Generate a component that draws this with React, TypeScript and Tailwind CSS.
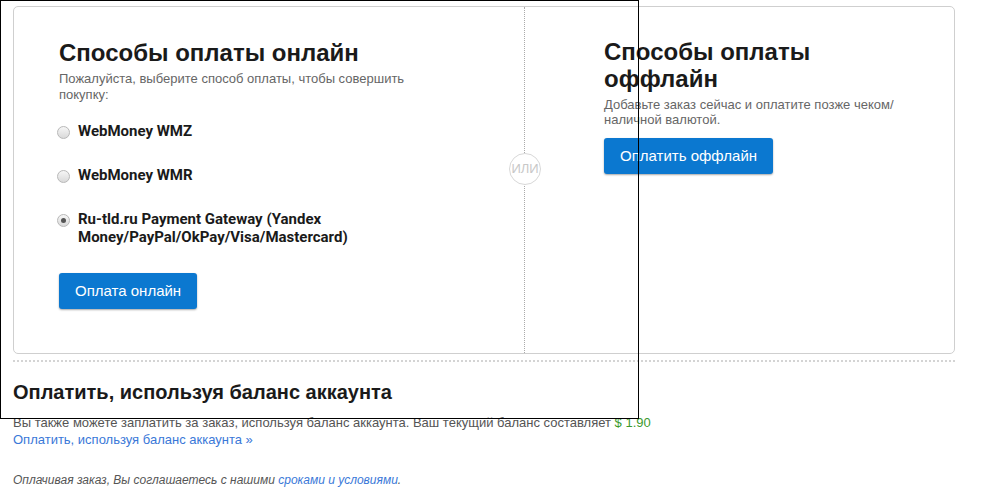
import { useState } from 'react';

const methods = [
  { id: 'wmz', label: 'WebMoney WMZ' },
  { id: 'wmr', label: 'WebMoney WMR' },
  { id: 'rutld', label: 'Ru-tld.ru Payment Gateway (Yandex Money/PayPal/OkPay/Visa/Mastercard)' },
];

const Radio = ({ checked }: { checked: boolean }) => (
  <span className="ml-[-2px] mt-[4px] flex h-[13px] w-[13px] shrink-0 items-center justify-center rounded-full border border-[#b8b8b8] bg-gradient-to-b from-[#f6f6f6] to-[#dadada]">
    {checked && <span className="h-[5px] w-[5px] rounded-full bg-[#555]" />}
  </span>
);

export default function App() {
  const [method, setMethod] = useState('rutld');

  return (
    <div className="relative min-h-[488px] w-[1002px] bg-white font-['Liberation_Sans',Arial,sans-serif] text-[#333]">
      <div className="w-[968px] px-[13px] pt-[6px]">
        {/* карточка с двумя колонками */}
        <div className="flex h-[348px] rounded-[5px] border border-[#cfcfcf]">
          <div className="relative w-[511px] border-r border-dotted border-[#aaa] pl-[45px] pt-[31px]">
            <h2 className="text-[24px] font-bold leading-[30px] text-[#1a1a1a]">Способы оплаты онлайн</h2>
            <p className="mt-[3px] w-[380px] text-[13px] leading-[16px] text-[#666]">
              Пожалуйста, выберите способ оплаты, чтобы совершить покупку:
            </p>

            <div className="mt-[19px] flex flex-col gap-[26px]">
              {methods.map((m) => (
                <label
                  key={m.id}
                  onClick={() => setMethod(m.id)}
                  className="flex cursor-pointer gap-[8px] font-['Roboto','Liberation_Sans',sans-serif] text-[15px] font-bold leading-[18px] text-[#1a1a1a]"
                >
                  <Radio checked={method === m.id} />
                  <span className="w-[290px]">{m.label}</span>
                </label>
              ))}
            </div>

            <button className="mt-[27px] h-[36px] rounded-[3px] bg-[#0b78d0] px-[16px] text-[15px] text-white shadow-[0_1px_2px_rgba(0,0,0,0.35)]">
              Оплата онлайн
            </button>

            <div className="absolute right-[-17px] top-[146px] flex h-[32px] w-[32px] items-center justify-center rounded-full border border-[#d8d8d8] bg-white text-[13px] text-[#c8c8c8]">
              ИЛИ
            </div>
          </div>

          <div className="flex-1 pl-[79px] pt-[31px]">
            <h2 className="w-[260px] text-[24px] font-bold leading-[27px] text-[#1a1a1a]">Способы оплаты оффлайн</h2>
            <p className="mt-[5px] w-[300px] text-[13px] leading-[15px] text-[#666]">
              Добавьте заказ сейчас и оплатите позже чеком/ наличной валютой.
            </p>
            <button className="mt-[11px] h-[36px] rounded-[3px] bg-[#0b78d0] px-[16px] text-[15px] text-white shadow-[0_1px_2px_rgba(0,0,0,0.35)]">
              Оплатить оффлайн
            </button>
          </div>
        </div>

        <div className="mt-[6px] border-t-2 border-dotted border-[#d4d4d4]" />

        <h3 className="mt-[17px] text-[20px] font-bold leading-[26px] text-[#1a1a1a]">Оплатить, используя баланс аккаунта</h3>
        <p className="mt-[9px] w-[700px] text-[13px] leading-[17px] text-[#555]">
          Вы также можете заплатить за заказ, используя баланс аккаунта. Ваш текущий баланс составляет{' '}
          <span className="text-[#3c9a2e]">$ 1.90</span>
          <br />
          <a className="text-[#3a78d8]">Оплатить, используя баланс аккаунта »</a>
        </p>

        <p className="mt-[24px] text-[12px] italic leading-[16px] text-[#555]">
          Оплачивая заказ, Вы соглашаетесь с нашими <a className="text-[#3a78d8]">сроками и условиями</a>.
        </p>
      </div>

      {/* рамка поверх страницы */}
      <div className="pointer-events-none absolute left-0 top-0 h-[419px] w-[639px] border border-black" />
    </div>
  );
}
